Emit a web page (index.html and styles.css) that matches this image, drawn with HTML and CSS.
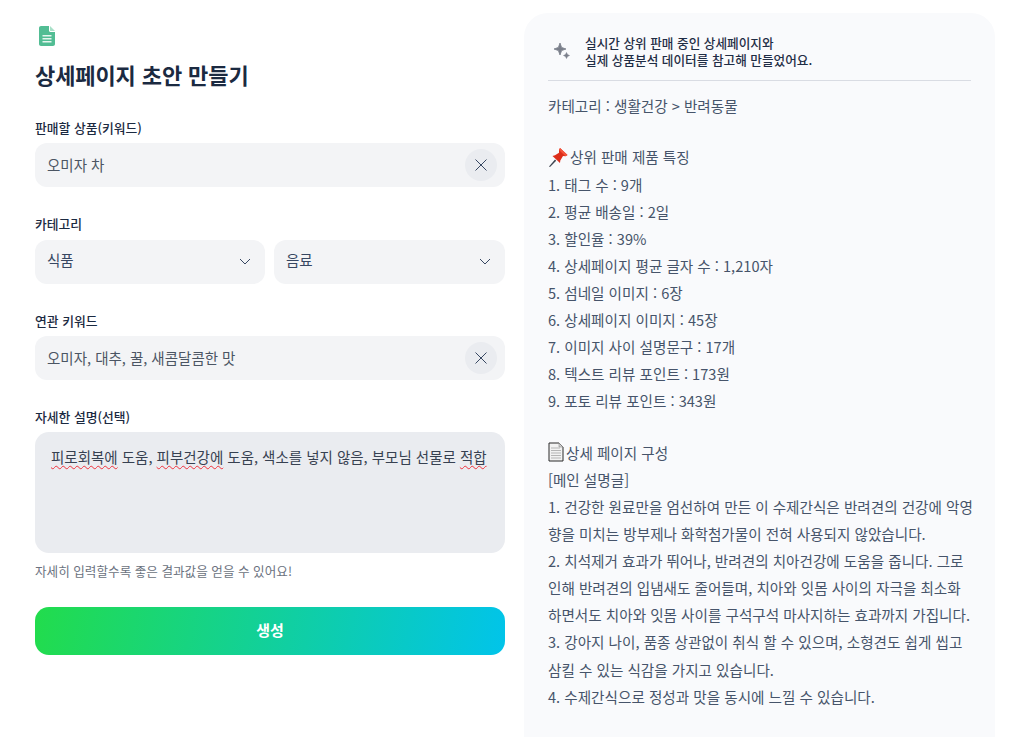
FILE: index.html
```html
<!DOCTYPE html>
<html lang="ko">
<head>
    <meta charset="UTF-8">
    <meta name="viewport" content="width=device-width, initial-scale=1.0">
    <title>상세페이지 초안 만들기</title>
    <link rel="stylesheet" href="styles.css">
</head>
<body>
    <div class="page">
        <form class="draftform" action="#">
            <svg class="docicon" width="16" height="20" viewBox="0 0 16 20">
                <path d="M2 0H10V4.5C10 5.3 10.7 6 11.5 6H16V18C16 19.1 15.1 20 14 20H2C.9 20 0 19.1 0 18V2C0 .9 .9 0 2 0Z" fill="#52bd94"/>
                <path d="M11 0L16 5H11.5C11.2 5 11 4.8 11 4.5Z" fill="#a8e0c8"/>
                <path d="M3.5 9H12.5V10.4H3.5ZM3.5 12H12.5V13.4H3.5ZM3.5 15H12.5V16.4H3.5Z" fill="#e6f6ef"/>
            </svg>
            <h1 class="title">상세페이지 초안 만들기</h1>

            <label class="label">판매할 상품(키워드)</label>
            <div class="field">
                <span class="fieldtext">오미자 차</span>
                <button class="clear" type="button">
                    <svg width="16" height="16" viewBox="0 0 16 16"><path d="M2.5 2.5L13.5 13.5M13.5 2.5L2.5 13.5" stroke="#374762" stroke-width="1" fill="none"/></svg>
                </button>
            </div>

            <label class="label label-cat">카테고리</label>
            <div class="selects">
                <div class="field">
                    <span class="fieldtext">식품</span>
                    <svg class="chevron" width="14" height="14" viewBox="0 0 14 14"><path d="M2 5L7 10L12 5" stroke="#374762" stroke-width="1" fill="none"/></svg>
                </div>
                <div class="field">
                    <span class="fieldtext">음료</span>
                    <svg class="chevron" width="14" height="14" viewBox="0 0 14 14"><path d="M2 5L7 10L12 5" stroke="#374762" stroke-width="1" fill="none"/></svg>
                </div>
            </div>

            <label class="label label-rel">연관 키워드</label>
            <div class="field">
                <span class="fieldtext">오미자, 대추, 꿀, 새콤달콤한 맛</span>
                <button class="clear" type="button">
                    <svg width="16" height="16" viewBox="0 0 16 16"><path d="M2.5 2.5L13.5 13.5M13.5 2.5L2.5 13.5" stroke="#374762" stroke-width="1" fill="none"/></svg>
                </button>
            </div>

            <label class="label label-desc">자세한 설명(선택)</label>
            <div class="textbox"><span class="typo">피로회복에</span> 도움, <span class="typo">피부건강에</span> 도움, 색소를 넣지 않음, 부모님 선물로 <span class="typo">적합</span></div>
            <p class="hint">자세히 입력할수록 좋은 결과값을 얻을 수 있어요!</p>
            <button class="generate" type="button">생성</button>
        </form>

        <div class="result">
            <div class="resulthead">
                <svg class="sparkle" width="18" height="18" viewBox="0 0 18 18">
                    <path d="M7 1L8.6 5.4L13 7L8.6 8.6L7 13L5.4 8.6L1 7L5.4 5.4Z" fill="#7a7f8a" stroke="#7a7f8a" stroke-width=".8" stroke-linejoin="round"/>
                    <path d="M13.5 10.5L14.5 12.5L16.5 13.5L14.5 14.5L13.5 16.5L12.5 14.5L10.5 13.5L12.5 12.5Z" fill="#7a7f8a" stroke="#7a7f8a" stroke-width=".5" stroke-linejoin="round"/>
                </svg>
                <p class="headtext">실시간 상위 판매 중인 상세페이지와<br>실제 상품분석 데이터를 참고해 만들었어요.</p>
            </div>
            <div class="resultbody">
                <p>카테고리 : 생활건강 &gt; 반려동물</p>
                <p class="blank"></p>
                <p class="withicon"><svg class="emoji" width="20" height="20" viewBox="0 0 20 20">
                    <path d="M1 19.5L7 12.5L8.2 13.7L2 20Z" fill="#3d4450"/>
                    <path d="M12 1L19.5 8L17.5 9.3L15 9L12.3 13.5L12 16L4.5 9L7 8.2L11 5.8L11 3Z" fill="#dd2e1a"/>
                    <path d="M12 1L19.5 8L17.5 9.3L11 3Z" fill="#f4543c"/>
                </svg>상위 판매 제품 특징</p>
                <p>1. 태그 수 : 9개</p>
                <p>2. 평균 배송일 : 2일</p>
                <p>3. 할인율 : 39%</p>
                <p>4. 상세페이지 평균 글자 수 : 1,210자</p>
                <p>5. 섬네일 이미지 : 6장</p>
                <p>6. 상세페이지 이미지 : 45장</p>
                <p>7. 이미지 사이 설명문구 : 17개</p>
                <p>8. 텍스트 리뷰 포인트 : 173원</p>
                <p>9. 포토 리뷰 포인트 : 343원</p>
                <p class="blank"></p>
                <p class="withicon"><svg class="emoji" width="16" height="20" viewBox="0 0 16 20">
                    <path d="M1 1H11L15 5V19H1Z" fill="#f2f2f2" stroke="#2b2b2b" stroke-width="1"/>
                    <path d="M11 1V5H15" fill="#cfcfcf" stroke="#8a8a8a" stroke-width=".6"/>
                    <path d="M3 6H12M3 8.5H13M3 11H13M3 13.5H13M3 16H13" stroke="#b5b5b5" stroke-width="1"/>
                </svg>상세 페이지 구성</p>
                <p>[메인 설명글]</p>
                <p>1. 건강한 원료만을 엄선하여 만든 이 수제간식은 반려견의 건강에 악영향을 미치는 방부제나 화학첨가물이 전혀 사용되지 않았습니다.</p>
                <p>2. 치석제거 효과가 뛰어나, 반려견의 치아건강에 도움을 줍니다. 그로 인해 반려견의 입냄새도 줄어들며, 치아와 잇몸 사이의 자극을 최소화 하면서도 치아와 잇몸 사이를 구석구석 마사지하는 효과까지 가집니다.</p>
                <p>3. 강아지 나이, 품종 상관없이 취식 할 수 있으며, 소형견도 쉽게 씹고 삼킬 수 있는 식감을 가지고 있습니다.</p>
                <p>4. 수제간식으로 정성과 맛을 동시에 느낄 수 있습니다.</p>
            </div>
        </div>
    </div>
</body>
</html>
```

FILE: styles.css
```css
* {
    box-sizing: border-box;
    margin: 0;
    padding: 0;
}
html, body {
    height: 100%;
    overflow: hidden;
}
body {
    background: white;
    color: #1f2d45;
    font-family: "Noto Sans CJK KR", "Noto Sans", sans-serif;
}
.page {
    display: flex;
    gap: 19px;
    padding: 13px 18px 0 35px;
    height: 737px;
}
.draftform {
    width: 470px;
    flex: none;
    display: flex;
    flex-direction: column;
    padding-top: 13px;
}
.docicon {
    margin-left: 4px;
}
.title {
    font-size: 22px;
    line-height: 34px;
    font-weight: 700;
    letter-spacing: -0.1px;
    color: #1b2a41;
    margin-top: 11px;
    margin-bottom: 1px;
}
.label {
    font-size: 12.8px;
    line-height: 18px;
    font-weight: 500;
    color: #1b2a41;
    margin-top: 27px;
    margin-bottom: 6px;
}
.label-cat {
    margin-top: 28px;
    margin-bottom: 7px;
}
.label-rel {
    margin-top: 28px;
}
.label-desc {
    margin-top: 28px;
}
.field {
    height: 44px;
    flex: none;
    display: flex;
    align-items: center;
    justify-content: space-between;
    background: #f3f4f6;
    border-radius: 12px;
    padding: 0 8px 0 12px;
}
.fieldtext {
    font-size: 14.5px;
    color: #4b5563;
    padding-bottom: 2px;
}
.clear {
    width: 32px;
    height: 32px;
    border: none;
    border-radius: 50%;
    background: #eaecf0;
    display: flex;
    align-items: center;
    justify-content: center;
}
.selects {
    display: grid;
    grid-template-columns: 230px 231px;
    gap: 9px;
}
.selects .field {
    padding-right: 13px;
}
.selects .fieldtext {
    color: #374762;
    padding-bottom: 6px;
}
.chevron {
    margin-bottom: 2px;
}
.textbox {
    height: 121px;
    background: #eaecf0;
    border-radius: 14px;
    padding: 12px 16px;
    font-size: 14.5px;
    line-height: 26px;
    color: #374151;
    white-space: nowrap;
}
.typo {
    text-decoration: underline wavy #f0323c 1px;
    text-underline-offset: 2px;
    text-decoration-skip-ink: none;
}
.hint {
    font-size: 12.6px;
    line-height: 17px;
    color: #6b7280;
    margin-top: 9px;
}
.generate {
    height: 48px;
    flex: none;
    margin-top: 28px;
    padding-bottom: 3px;
    border: none;
    border-radius: 14px;
    background: linear-gradient(100deg, #22dc4c, #01c4ea);
    color: white;
    font-family: inherit;
    font-size: 15px;
    font-weight: 700;
}
.result {
    width: 471px;
    flex: none;
    background: #f9fafc;
    border-radius: 24px 24px 0 0;
    padding: 0 24px;
}
.resulthead {
    display: flex;
    align-items: center;
    gap: 14px;
    height: 68px;
    padding: 8px 0 0 5px;
    border-bottom: 1px solid #d9dce3;
}
.headtext {
    font-size: 12.65px;
    line-height: 17px;
    font-weight: 500;
    color: #1f2d45;
}
.resultbody {
    margin-top: 11px;
    margin-right: -4px;
    font-size: 14.6px;
    line-height: 27.1px;
    color: #46546a;
}
.blank {
    height: 24.4px;
}
.withicon {
    display: flex;
    align-items: center;
}
.emoji {
    flex: none;
    margin-right: 2px;
}
```
